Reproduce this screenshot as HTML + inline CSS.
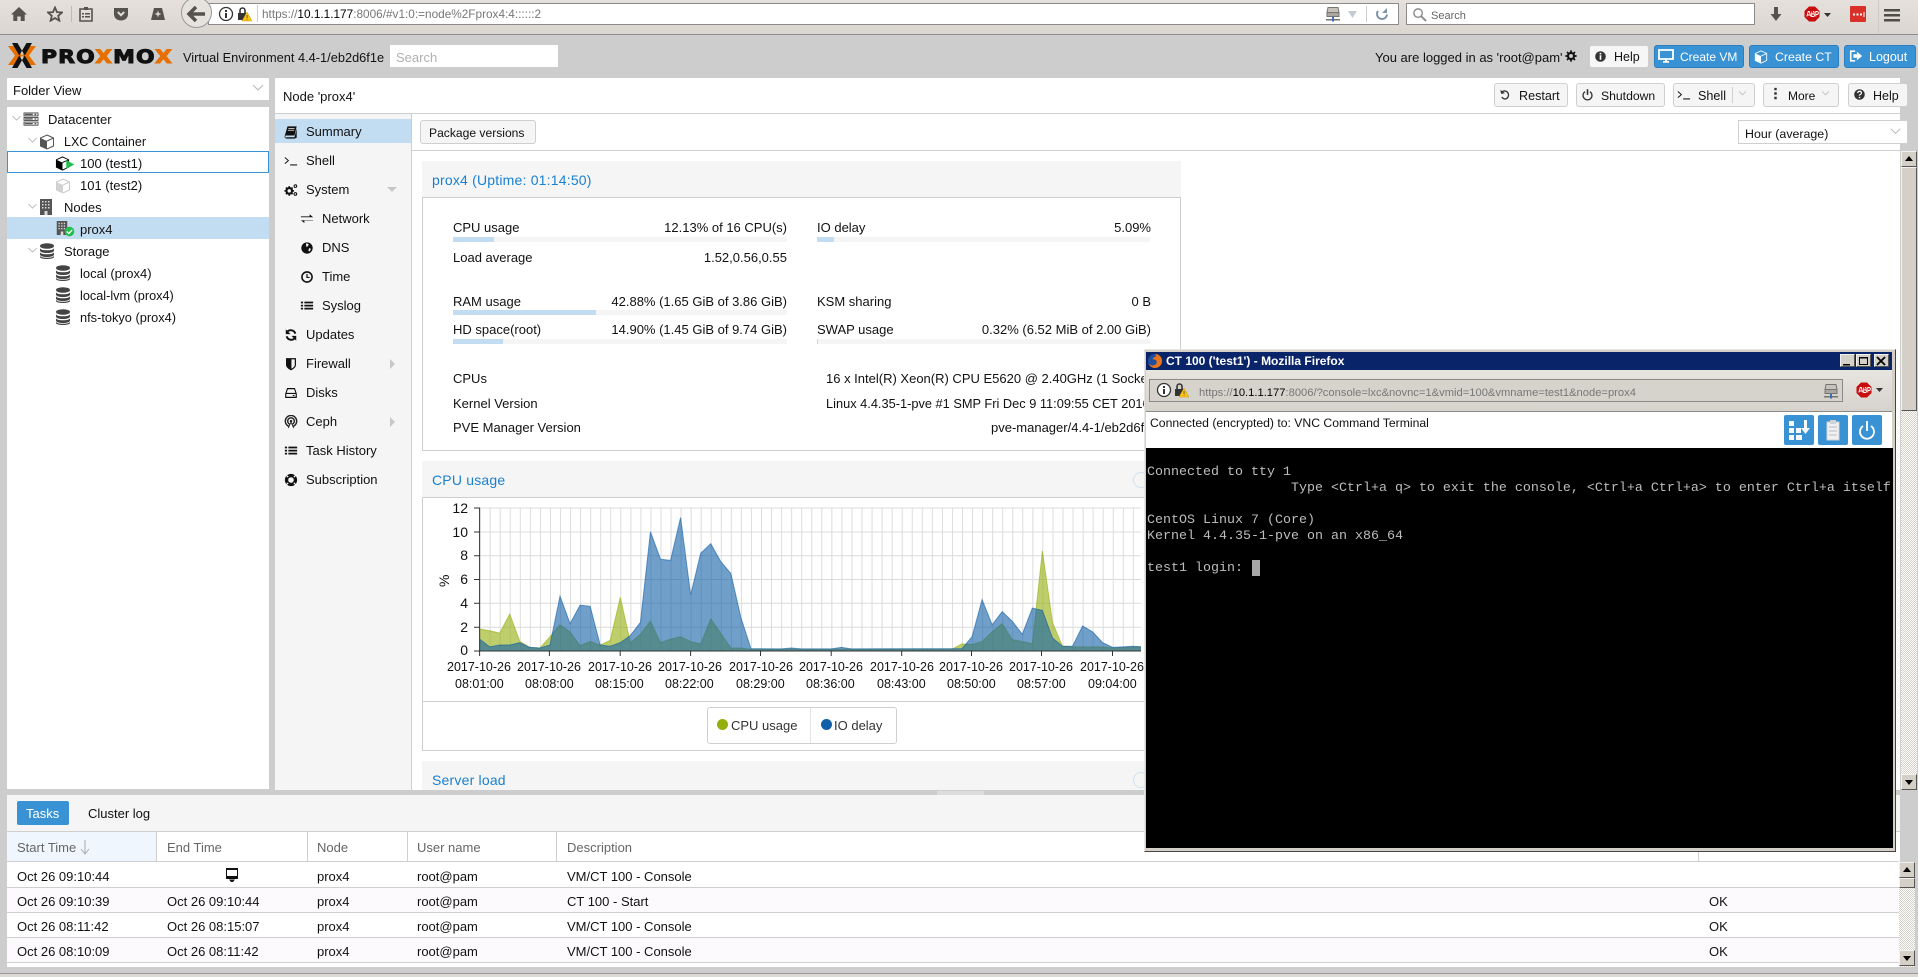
<!DOCTYPE html>
<html><head><meta charset="utf-8"><title>Proxmox</title>
<style>
html,body{margin:0;padding:0;width:1918px;height:977px;overflow:hidden;background:#cdcdcd}
body{position:relative;font:13px "Liberation Sans",sans-serif;color:#111}
.a{position:absolute}
.t{position:absolute;white-space:nowrap;line-height:16px;height:16px;margin-top:1px}
.r{position:absolute;white-space:nowrap;line-height:16px;height:16px;text-align:right;margin-top:1px}
.L{position:absolute;left:0;top:0}
.btn{position:absolute;box-sizing:border-box;border:1px solid #cfcfcf;border-radius:3px;background:#f5f5f5}
.bl{position:absolute;box-sizing:border-box;border:1px solid #2a7fc0;border-radius:3px;background:#3892d4}
.w{color:#fff}
.g{color:#666}
.tb{color:#1a80d0;letter-spacing:.2px;margin-top:0}
.bar{position:absolute;height:5px;background:#f5f5f5}
.bar i{position:absolute;left:0;top:0;height:5px;background:#c2ddf2}
.u{font-size:11px;color:#777;margin-top:0}
.u b{font-weight:normal;color:#000}
.term{position:absolute;left:1147px;font:13.33px/16px "Liberation Mono",monospace;color:#bdbdbd;white-space:pre;margin-top:1px}
.track{background:repeating-conic-gradient(#d4d0c8 0 25%,#fff 0 50%) 0 0/2px 2px}
.sb{position:absolute;box-sizing:border-box;background:#d4d0c8;border:1px solid;border-color:#f4f2ee #555 #555 #f4f2ee}
.d{font-size:12.5px;margin-top:0}
.y{font-size:14px;margin-top:0}
</style></head>
<body>
<svg width="0" height="0" style="position:absolute">
<defs>
<symbol id="home" viewBox="0 0 16 16"><path d="M8 1L0 8.5h2.3V15h4v-4.500h3.400V15h4V8.500H16z" fill="#55534c"/></symbol>
<symbol id="star" viewBox="0 0 16 16"><path d="M8 1.500l2 4.600 5 .4-3.800 3.300 1.200 4.900L8 12.100l-4.400 2.600 1.200-4.900L1 6.500l5-.4z" fill="none" stroke="#55534c" stroke-width="1.800"/></symbol>
<symbol id="clip" viewBox="0 0 16 16"><path d="M2 3h12v12H2z" fill="none" stroke="#55534c" stroke-width="1.600"/><path d="M6 1h4v3H6zM4 7h2v1.500H4zm3 0h5v1.500H7zm-3 3h2v1.500H4zm3 0h5v1.500H7z" fill="#55534c"/></symbol>
<symbol id="pocket" viewBox="0 0 16 16"><path d="M1 2h14v6c0 4-3 6.500-7 6.500S1 12 1 8z" fill="#55534c"/><path d="M4.800 6L8 9.200 11.200 6" fill="none" stroke="#e0dcd7" stroke-width="2"/></symbol>
<symbol id="hat" viewBox="0 0 16 16"><path d="M4 2h8l3 12H1z" fill="#55534c"/><path d="M8 5.500v5M5.500 8h5" stroke="#e0dcd7" stroke-width="1.400"/></symbol>
<symbol id="info" viewBox="0 0 16 16"><circle cx="8" cy="8" r="6.500" fill="#fff" stroke="#333" stroke-width="1.300"/><path d="M7 4h2v2H7zM7 7h2v5H7z" fill="#333"/></symbol>
<symbol id="lock" viewBox="0 0 16 16"><path d="M2 7h9v7H2z" fill="#333"/><path d="M4 7V4.500a2.500 2.500 0 015 0V7" fill="none" stroke="#333" stroke-width="1.600"/><path d="M11 6l5 9H6z" fill="#fcc419" stroke="#c89a10" stroke-width=".5"/><path d="M10.700 9h.7v3h-.7zm0 3.800h.7v.8h-.7z" fill="#333"/></symbol>
<symbol id="srv" viewBox="0 0 16 16"><path d="M3 1.500h10l1 5H2z" fill="#c6c2bc" stroke="#77756f"/><path d="M2 6.500h12v4H2z" fill="#aaa6a0" stroke="#77756f"/><path d="M1 13h14v1.500H1z" fill="#77756f"/><path d="M7 11h2v4.500H7z" fill="#3a6fc0"/></symbol>
<symbol id="down" viewBox="0 0 16 16"><path d="M6 1h4v7h3.500L8 15 2.500 8H6z" fill="#55534c"/></symbol>
<symbol id="reload" viewBox="0 0 16 16"><path d="M13 8.500A5 5 0 114 5" fill="none" stroke="#7f93a8" stroke-width="2"/><path d="M3 2v5h5z" fill="#7f93a8" transform="translate(16 0) scale(-1 1)"/></symbol>
<symbol id="search" viewBox="0 0 16 16"><circle cx="6.500" cy="6.500" r="4.500" fill="none" stroke="#8a8a8a" stroke-width="1.500"/><path d="M10 10l5 5" stroke="#8a8a8a" stroke-width="2"/></symbol>
<symbol id="abp" viewBox="0 0 16 16"><path d="M5 .5h6L15.500 5v6L11 15.500H5L.5 11V5z" fill="#c70d0d"/><path d="M2.800 10.500L4.300 5.500h1L6.800 10.500M3.400 9h2.800M7.700 5.500v5h1.500q1.300 0 1.300-1.400 0-1.200-1.300-1.200H7.700m0 0h1.300q1.200 0 1.200-1.200 0-1.200-1.200-1.200M11.800 10.500v-5h1.200q1.400 0 1.400 1.500t-1.400 1.500h-1.200" fill="none" stroke="#fff" stroke-width=".9"/></symbol>
<symbol id="chev" viewBox="0 0 16 16"><path d="M3 5l5 5 5-5" fill="none" stroke="#b9b9b9" stroke-width="1.100"/></symbol>
<symbol id="dc" viewBox="0 0 16 16"><path d="M0 1h16v3.500H0zM0 6.200h16v3.500H0zM0 11.500h16V15H0z" fill="#fff" stroke="#444" stroke-width="1"/><path d="M1 2h9v1.500H1zM1 7.200h9v1.500H1zM1 12.500h9V14H1zM12 2h2v1.500h-2zM12 7.200h2v1.500h-2zM12 12.500h2V14h-2z" fill="#555"/></symbol>
<symbol id="cube" viewBox="0 0 16 16"><path d="M8 1l6.500 3v8L8 15l-6.500-3V4z" fill="#fff" stroke="#555" stroke-width="1"/><path d="M1.500 4L8 7v8l-6.500-3z" fill="#555"/><path d="M8 7l6.500-3" stroke="#555"/></symbol>
<symbol id="cubeb" viewBox="0 0 16 16"><path d="M8 1l6.500 3v8L8 15l-6.500-3V4z" fill="#fff" stroke="#000" stroke-width="1"/><path d="M1.500 4L8 7v8l-6.500-3z" fill="#000"/><path d="M8 7l6.500-3" stroke="#000"/></symbol>
<symbol id="cubeg" viewBox="0 0 16 16"><path d="M8 1l6.500 3v8L8 15l-6.500-3V4z" fill="#fff" stroke="#ccc" stroke-width="1"/><path d="M1.500 4L8 7v8l-6.500-3z" fill="#d2d2d2"/><path d="M8 7l6.500-3" stroke="#ccc"/></symbol>
<symbol id="cubew" viewBox="0 0 16 16"><path d="M8 1l6.500 3v8L8 15l-6.500-3V4z" fill="#3892d4" stroke="#fff" stroke-width="1"/><path d="M1.500 4L8 7v8l-6.500-3z" fill="#fff"/><path d="M8 7l6.500-3" stroke="#fff"/></symbol>
<symbol id="bld" viewBox="0 0 16 16"><path d="M2 0h12v16H2z" fill="#555"/><path d="M4 2h1.500v1.500H4zM7 2h1.500v1.500H7zM10 2h1.500v1.500H10zM4 5h1.500v1.500H4zM7 5h1.500v1.500H7zM10 5h1.500v1.500H10zM4 8h1.500v1.500H4zM7 8h1.500v1.500H7zM10 8h1.500v1.500H10zM6.500 12h3v4h-3z" fill="#d9d9d9"/></symbol>
<symbol id="db" viewBox="0 0 16 16"><ellipse cx="8" cy="3" rx="7" ry="2.800" fill="#444"/><path d="M1 5v2.500C1 9 4 10 8 10s7-1 7-2.500V5C15 6.500 12 7.300 8 7.300S1 6.500 1 5z" fill="#444"/><path d="M1 9v2.500C1 13 4 14 8 14s7-1 7-2.500V9c0 1.500-3 2.300-7 2.300S1 10.500 1 9z" fill="#444"/><path d="M1 12.500V14c0 1.200 3 2 7 2s7-.8 7-2v-1.500c0 1.500-3 2.300-7 2.300s-7-.8-7-2.300z" fill="#444"/></symbol>
<symbol id="book" viewBox="0 0 16 16"><path d="M4 1.500h10.500L12 12H2.500q-1.500 0-1 1.500t2 .5H12l2.500-10v10.500L12 15.500H3q-2.500 0-2.300-2.500z" fill="#111"/><path d="M5 4h7M4.500 6h7" stroke="#f5f5f5" stroke-width=".8"/></symbol>
<symbol id="prompt" viewBox="0 0 16 16"><path d="M1 4l4 3.500L1 11" fill="none" stroke="#111" stroke-width="1.100"/><path d="M7 12.500h8" stroke="#111" stroke-width="1.200"/></symbol>
<symbol id="cogs" viewBox="0 0 16 16"><circle cx="6" cy="9" r="3.200" fill="none" stroke="#111" stroke-width="2.400"/><path d="M6 3.500v2M6 12.500v2M.5 9h2M9.500 9h2M2.200 5.200l1.400 1.400M8.400 11.400l1.400 1.400M2.200 12.800l1.400-1.400M8.400 6.600l1.400-1.400" stroke="#111" stroke-width="1.800"/><circle cx="13" cy="3.500" r="1.500" fill="none" stroke="#111" stroke-width="1.200"/><circle cx="13" cy="12.500" r="1.500" fill="none" stroke="#111" stroke-width="1.200"/></symbol>
<symbol id="xch" viewBox="0 0 16 16"><path d="M1 5h10V2.500L15 6H1zM15 10H5v2.500L1 9.500h14z" fill="#111"/></symbol>
<symbol id="globe" viewBox="0 0 16 16"><circle cx="8" cy="8" r="6.500" fill="#111"/><path d="M7 2.500l3 1-1 2.500-2 .5zM10.500 8l2 1-1.500 3-1.500-1z" fill="#f5f5f5"/></symbol>
<symbol id="clock" viewBox="0 0 16 16"><circle cx="8" cy="8" r="5.800" fill="none" stroke="#111" stroke-width="1.800"/><path d="M8 4.500V8.500H11" fill="none" stroke="#111" stroke-width="1.400"/></symbol>
<symbol id="list" viewBox="0 0 16 16"><path d="M1 3h2.500v2H1zM5 3h10v2H5zM1 6.500h2.500v2H1zM5 6.500h10v2H5zM1 10h2.500v2H1zM5 10h10v2H5z" fill="#111"/></symbol>
<symbol id="upd" viewBox="0 0 16 16"><path d="M13 6.500A5.500 5.500 0 003.500 4.500M3 9.500a5.500 5.500 0 009.500 2" fill="none" stroke="#111" stroke-width="2.200"/><path d="M2 1.500V7h5.500zM14 14.500V9H8.500z" fill="#111"/></symbol>
<symbol id="shield" viewBox="0 0 16 16"><path d="M3 2h10v7q0 3-5 5.500Q3 12 3 9z" fill="none" stroke="#111" stroke-width="1.400"/><path d="M3 2h5.500v12.500Q3 12 3 9z" fill="#111"/></symbol>
<symbol id="disk" viewBox="0 0 16 16"><path d="M2 9l2-6h8l2 6v4H2z" fill="none" stroke="#111" stroke-width="1.300"/><path d="M2 8.500h12" stroke="#111" stroke-width="1.300"/><path d="M10 10.200h2v1.300h-2z" fill="#111"/></symbol>
<symbol id="ceph" viewBox="0 0 16 16"><circle cx="8" cy="7" r="6.500" fill="none" stroke="#222" stroke-width="1.600"/><circle cx="8" cy="7" r="3.800" fill="none" stroke="#222" stroke-width="1.600"/><circle cx="8" cy="7" r="1.400" fill="#222"/><path d="M5 15l3-7 3 7" fill="#fff" stroke="#222"/></symbol>
<symbol id="buoy" viewBox="0 0 16 16"><circle cx="8" cy="8" r="7" fill="#111"/><circle cx="8" cy="8" r="3.200" fill="#f5f5f5"/><path d="M2.500 2.500l2.300 2.300M13.500 2.500l-2.300 2.300M2.500 13.500l2.300-2.300M13.500 13.500l-2.300-2.300" stroke="#f5f5f5" stroke-width="1.400"/></symbol>
<symbol id="ic" viewBox="0 0 16 16"><circle cx="8" cy="8" r="6.500" fill="#333"/><path d="M7 3.500h2v2H7zM7 6.500h2V12H7z" fill="#fff"/></symbol>
<symbol id="q" viewBox="0 0 16 16"><circle cx="8" cy="8" r="6.500" fill="#333"/><path d="M5.700 6.200q.3-2.200 2.400-2.200t2.300 2q0 1.200-1.400 2t-1 1.500" fill="none" stroke="#fff" stroke-width="1.500"/><path d="M7.200 10.800h1.700v1.700H7.200z" fill="#fff"/></symbol>
<symbol id="gear" viewBox="0 0 16 16"><circle cx="8" cy="8" r="4" fill="none" stroke="#111" stroke-width="2.800"/><path d="M8 .5v3M8 12.500v3M.5 8h3M12.500 8h3M2.700 2.700l2.100 2.100M11.200 11.200l2.100 2.100M2.700 13.300l2.100-2.100M11.200 4.800l2.100-2.100" stroke="#111" stroke-width="2.400"/></symbol>
<symbol id="mon" viewBox="0 0 16 16"><path d="M1 2h14v9H1z" fill="none" stroke="#fff" stroke-width="1.800"/><path d="M5 13h6v1.800H5zM7 11h2v2H7z" fill="#fff"/></symbol>
<symbol id="monb" viewBox="0 0 16 16"><path d="M2 1h12v11H2z" fill="#111"/><path d="M3 3h10v6H3z" fill="#fff"/><path d="M5 12.500h6L9 15H7z" fill="#111"/></symbol>
<symbol id="logout" viewBox="0 0 16 16"><path d="M7 2.500H2v11h5" fill="none" stroke="#fff" stroke-width="1.800"/><path d="M9 3l6 5-6 5v-3H5V6h4z" fill="#fff"/></symbol>
<symbol id="restart" viewBox="0 0 16 16"><path d="M4 4.500A5 5 0 118 13.500 5 5 0 013.500 11" fill="none" stroke="#333" stroke-width="1.600"/><path d="M2 2v5h5z" fill="#333" transform="rotate(-10 4 4)"/></symbol>
<symbol id="power" viewBox="0 0 16 16"><path d="M5 4.500a5.500 5.500 0 106 0" fill="none" stroke="#333" stroke-width="1.600"/><path d="M7 1.500h2v7H7z" fill="#333"/></symbol>
<symbol id="dots" viewBox="0 0 16 16"><path d="M6.500 1h3v3h-3zM6.500 6.500h3v3h-3zM6.500 12h3v3h-3z" fill="#333"/></symbol>
<symbol id="ok" viewBox="0 0 16 16"><circle cx="8" cy="8" r="7" fill="#21bf4b"/><path d="M4 8l3 3 5-5.500" fill="none" stroke="#fff" stroke-width="1.800"/></symbol>
<symbol id="play" viewBox="0 0 16 16"><path d="M2 1l13 7-13 7z" fill="#21bf4b"/></symbol>
<pattern id="vg" patternUnits="userSpaceOnUse" width="10.05" height="143" x="479.6" y="508"><path d="M.5 0v143" stroke="#dcdcdc"/></pattern>
</defs>
</svg>

<!-- firefox toolbar -->
<div class="a" style="left:0;top:0;width:1918px;height:34px;background:linear-gradient(#e6e0dc,#dad6d0)"></div>
<div class="a" style="left:0;top:34px;width:1918px;height:1px;background:#8e8e8e"></div>
<div class="a" style="left:208px;top:3px;width:1191px;height:22px;box-sizing:border-box;background:#fff;border:1px solid #8c8c8c"></div>
<div class="a" style="left:1406px;top:3px;width:349px;height:22px;box-sizing:border-box;background:#fff;border:1px solid #8c8c8c"></div>
<div class="a" style="left:181px;top:-3px;width:31px;height:31px;box-sizing:border-box;border-radius:50%;background:#e6e2dd;border:1px solid #999"></div>
<div class="a" style="left:257px;top:5px;width:1px;height:17px;background:#ccc"></div>
<div class="a" style="left:1366px;top:6px;width:1px;height:16px;background:#ccc"></div>
<div class="a" style="left:71px;top:6px;width:1px;height:16px;background:#bbb"></div>
<div class="a" style="left:1878px;top:0;width:1px;height:33px;background:#cdc9c3"></div>

<!-- panels -->
<div class="a" style="left:390px;top:45px;width:168px;height:22px;background:#fff"></div>
<div class="a" style="left:7px;top:78px;width:262px;height:22px;background:#fff"></div>
<div class="a" style="left:7px;top:107px;width:262px;height:682px;background:#fff"></div>
<div class="a" style="left:7px;top:217px;width:262px;height:22px;background:#c2ddf2"></div>
<div class="a" style="left:7px;top:151px;width:262px;height:22px;box-sizing:border-box;border:1px solid #3892d4"></div>
<div class="a" style="left:275px;top:78px;width:1625px;height:712px;background:#fff"></div>
<div class="a" style="left:275px;top:113px;width:1625px;height:1px;background:#cfcfcf"></div>
<div class="a" style="left:275px;top:114px;width:136px;height:676px;background:#f5f5f5"></div>
<div class="a" style="left:411px;top:114px;width:1px;height:676px;background:#cfcfcf"></div>
<div class="a" style="left:275px;top:119px;width:136px;height:24px;background:#c2ddf2"></div>
<div class="a" style="left:412px;top:150px;width:1488px;height:1px;background:#cfcfcf"></div>
<div class="btn" style="left:420px;top:120px;width:116px;height:24px"></div>
<div class="a" style="left:1738px;top:120px;width:170px;height:24px;box-sizing:border-box;border:1px solid #cfcfcf;background:#fff"></div>

<!-- toolbar buttons -->
<div class="btn" style="left:1589px;top:45px;width:60px;height:23px;background:#f6f6f6"></div>
<div class="bl" style="left:1654px;top:45px;width:90px;height:23px"></div>
<div class="bl" style="left:1749px;top:45px;width:90px;height:23px"></div>
<div class="bl" style="left:1844px;top:45px;width:72px;height:23px"></div>
<div class="btn" style="left:1494px;top:83px;width:74px;height:24px"></div>
<div class="btn" style="left:1576px;top:83px;width:89px;height:24px"></div>
<div class="btn" style="left:1673px;top:83px;width:82px;height:24px"></div>
<div class="a" style="left:1732px;top:87px;width:1px;height:16px;background:#cfcfcf"></div>
<div class="btn" style="left:1763px;top:83px;width:76px;height:24px"></div>
<div class="btn" style="left:1848px;top:83px;width:60px;height:24px"></div>

<!-- summary panel -->
<div class="a" style="left:422px;top:161px;width:759px;height:36px;background:#f5f5f5"></div>
<div class="a" style="left:422px;top:197px;width:759px;height:254px;box-sizing:border-box;border:1px solid #cfcfcf;background:#fff"></div>
<div class="bar" style="left:453px;top:237px;width:334px"><i style="width:41px"></i></div>
<div class="bar" style="left:817px;top:237px;width:333px"><i style="width:17px"></i></div>
<div class="bar" style="left:453px;top:310px;width:334px"><i style="width:143px"></i></div>
<div class="bar" style="left:453px;top:339px;width:334px"><i style="width:50px"></i></div>
<div class="bar" style="left:817px;top:339px;width:333px"><i style="width:1px"></i></div>

<!-- cpu panel -->
<div class="a" style="left:422px;top:461px;width:759px;height:36px;background:#f5f5f5"></div>
<div class="a" style="left:422px;top:497px;width:759px;height:254px;box-sizing:border-box;border:1px solid #cfcfcf;background:#fff"></div>
<div class="a" style="left:422px;top:701px;width:759px;height:1px;background:#cfcfcf"></div>
<div class="a" style="left:707px;top:707px;width:190px;height:37px;box-sizing:border-box;border:1px solid #cfcfcf;border-radius:3px;background:#fff"></div>
<div class="a" style="left:810px;top:708px;width:1px;height:35px;background:#e4e4e4"></div>
<div class="a" style="left:717px;top:719px;width:11px;height:11px;border-radius:50%;background:#94ae0a"></div>
<div class="a" style="left:821px;top:719px;width:11px;height:11px;border-radius:50%;background:#115fa6"></div>
<div class="a" style="left:422px;top:761px;width:759px;height:29px;background:#f5f5f5"></div>
<div class="a" style="left:1133px;top:472px;width:16px;height:16px;box-sizing:border-box;border:1px solid #cfe3f3;border-radius:50%"></div>
<div class="a" style="left:1133px;top:772px;width:16px;height:16px;box-sizing:border-box;border:1px solid #cfe3f3;border-radius:50%"></div>

<!-- chart -->
<svg class="L" width="1918" height="977" style="pointer-events:none">
<rect x="479.6" y="508" width="661.4" height="143" fill="url(#vg)"/>
<path d="M479.600 508H1141M479.600 532H1141M479.600 555.800H1141M479.600 579.500H1141M479.600 603.300H1141M479.600 627.200H1141" stroke="#dcdcdc" fill="none"/>
<svg x="479.6" y="500" width="661.4" height="152" viewBox="0 0 661.4 152">
<g transform="translate(0,151) scale(10.05,-11.92)">
<polygon fill="#94ae0a" fill-opacity=".6" stroke="#94ae0a" stroke-opacity=".6" vector-effect="non-scaling-stroke" points="0,0 0,1.85 1,1.7 2,1.5 3,3.1 4,.8 5,.3 6,.25 7,1.2 8,2.2 9,1.6 10,.45 11,.8 12,.5 13,.9 14,4.5 15,.7 16,1.4 17,2.5 18,.7 19,1 20,1.2 21,.8 22,.6 23,2.7 24,1.5 25,.25 26,.25 27,.15 47,.15 48,.6 49,.55 50,.8 51,1.6 52,2.3 53,.95 54,.8 55,.6 56,8.4 57,2.4 58,.4 59,.35 62,.35 63,.25 66,.35 66,0"/>
<polygon fill="#115fa6" fill-opacity=".6" stroke="#115fa6" stroke-opacity=".6" vector-effect="non-scaling-stroke" points="0,0 0,1 1,.35 2,.5 3,.5 4,.7 5,.3 6,.25 7,.5 8,4.6 9,2.3 10,3.85 11,3.75 12,.5 13,.4 14,.7 15,1.3 16,2.4 17,10 18,7.7 19,7.6 20,11.2 21,4.7 22,8.2 23,9 24,7.5 25,6.5 26,2.8 27,.2 30,.18 31,.25 32,.18 35,.18 36,.3 37,.18 48,.2 49,1.2 50,4.3 51,2.2 52,3.3 53,2.5 54,1.4 55,3.6 56,3.4 57,1.1 58,.4 59,.4 60,2.1 61,1.6 62,.7 63,.3 64,.35 65,.4 66,.35 66,0"/>
</g></svg>
<path d="M479.600 508V652M474 508H480M474 532H480M474 555.800H480M474 579.500H480M474 603.300H480M474 627.200H480M474 651H1141" stroke="#333" fill="none"/>
<path d="M479.600 651v5M549.400 651v5M620.200 651v5M690.600 651v5M760.500 651v5M831.200 651v5M901.700 651v5M971.500 651v5M1041.500 651v5M1112.500 651v5" stroke="#333" fill="none"/>
</svg>

<!-- icon layer -->
<svg class="L" width="1918" height="977">
<use href="#home" x="11" y="6" width="16" height="16"/>
<use href="#star" x="47" y="6" width="16" height="16"/>
<use href="#clip" x="78" y="6" width="16" height="16"/>
<use href="#pocket" x="113" y="6" width="16" height="16"/>
<use href="#hat" x="150" y="6" width="16" height="16"/>
<path d="M189 14h16M196 7l-7 7 7 7" fill="none" stroke="#55534c" stroke-width="3.500"/>
<use href="#info" x="218" y="6" width="16" height="16"/>
<use href="#lock" x="236" y="6" width="16" height="16"/>
<use href="#srv" x="1325" y="6" width="16" height="16"/>
<path d="M1348 11h9l-4.500 7z" fill="#c4cbd3"/>
<use href="#reload" x="1374" y="6" width="16" height="16"/>
<use href="#search" x="1412" y="7" width="15" height="15"/>
<use href="#down" x="1768" y="6" width="16" height="16"/>
<use href="#abp" x="1804" y="6" width="16" height="16"/>
<path d="M1824 13h7l-3.500 4z" fill="#333"/>
<rect x="1850" y="6" width="16" height="16" rx="1" fill="#d9302a"/>
<path d="M1853 13.500h2v2h-2zM1856.500 13.500h2v2h-2zM1860 13.500h2v2h-2zM1863.500 12h1v5h-1z" fill="#fff"/>
<path d="M1884 9h16v2.500h-16zM1884 14h16v2.500h-16zM1884 19h16v2.500h-16z" fill="#4f4d47"/>

<!-- logo -->
<path d="M8 46h7l7 9.500-7 9.500H8l7-9.500zM36 46h-7l-7 9.500 7 9.500h7l-7-9.500z" fill="#e57000"/>
<path d="M12 43h5.500L32 68h-5.500zM32 43h-5.500L12 68h5.500z" fill="#111"/>

<use href="#chev" x="250" y="80" width="16" height="16"/>
<use href="#chev" x="10" y="112" width="13" height="13"/>
<use href="#dc" x="23" y="112" width="16" height="14"/>
<use href="#chev" x="26" y="134" width="13" height="13"/>
<use href="#cube" x="39" y="134" width="16" height="16"/>
<use href="#cubeb" x="55" y="156" width="15" height="15"/>
<use href="#play" x="65" y="159" width="10" height="11"/>
<use href="#cubeg" x="55" y="178" width="16" height="16"/>
<use href="#chev" x="26" y="200" width="13" height="13"/>
<use href="#bld" x="38" y="199" width="16" height="16"/>
<use href="#bld" x="54" y="221" width="16" height="14"/>
<use href="#ok" x="64" y="226" width="11" height="11"/>
<use href="#chev" x="26" y="244" width="13" height="13"/>
<use href="#db" x="39" y="243" width="16" height="16"/>
<use href="#db" x="55" y="265" width="16" height="16"/>
<use href="#db" x="55" y="287" width="16" height="16"/>
<use href="#db" x="55" y="309" width="16" height="16"/>

<use href="#book" x="284" y="125" width="14" height="14"/>
<use href="#prompt" x="284" y="154" width="14" height="14"/>
<use href="#cogs" x="284" y="183" width="14" height="14"/>
<path d="M387 187h10l-5 5z" fill="#c8c8c8"/>
<use href="#xch" x="300" y="212" width="14" height="14"/>
<use href="#globe" x="300" y="241" width="14" height="14"/>
<use href="#clock" x="300" y="270" width="14" height="14"/>
<use href="#list" x="300" y="299" width="14" height="14"/>
<use href="#upd" x="284" y="328" width="14" height="14"/>
<use href="#shield" x="284" y="357" width="14" height="14"/>
<path d="M390 359l5 5-5 5z" fill="#c8c8c8"/>
<use href="#disk" x="284" y="386" width="14" height="14"/>
<use href="#ceph" x="284" y="415" width="14" height="14"/>
<path d="M390 417l5 5-5 5z" fill="#c8c8c8"/>
<use href="#list" x="284" y="444" width="14" height="14"/>
<use href="#buoy" x="284" y="473" width="14" height="14"/>

<use href="#gear" x="1565" y="50" width="12" height="12"/>
<use href="#ic" x="1594" y="50" width="13" height="13"/>
<use href="#mon" x="1658" y="48" width="16" height="16"/>
<use href="#cubew" x="1754" y="50" width="14" height="14"/>
<use href="#logout" x="1849" y="49" width="14" height="14"/>
<use href="#restart" x="1499" y="88" width="13" height="13"/>
<use href="#power" x="1581" y="88" width="13" height="13"/>
<use href="#prompt" x="1677" y="88" width="14" height="14"/>
<use href="#chev" x="1737" y="88" width="11" height="11"/>
<use href="#dots" x="1769" y="87" width="13" height="13"/>
<use href="#chev" x="1820" y="88" width="11" height="11"/>
<use href="#q" x="1853" y="88" width="13" height="13"/>
<use href="#chev" x="1888" y="124" width="15" height="15"/>
</svg>

<!-- toolbar text -->
<span class="t u" style="left:262px;top:6px;font-size:11.8px">https://<b>10.1.1.177</b>:8006/#v1:0:=node%2Fprox4:4::::::2</span>
<span class="t g" style="left:1431px;top:7px;font-size:11px">Search</span>

<span class="t" style="left:41px;top:45px;height:22px;font:bold 19px/22px 'DejaVu Sans',sans-serif;letter-spacing:1px;color:#111;-webkit-text-stroke:1px #111;transform:scaleX(1.15);transform-origin:0 50%">PRO<span style="color:#e57000;-webkit-text-stroke-color:#e57000">X</span>MO<span style="color:#e57000;-webkit-text-stroke-color:#e57000">X</span></span>
<span class="t" style="left:183px;top:49px;font-size:12.8px">Virtual Environment 4.4-1/eb2d6f1e</span>
<span class="t" style="left:396px;top:49px;color:#b0b0b0">Search</span>
<span class="t" style="left:1375px;top:49px">You are logged in as 'root@pam'</span>
<span class="t" style="left:1614px;top:48px;font-size:12.5px">Help</span>
<span class="t w" style="left:1680px;top:48px;font-size:12px">Create VM</span>
<span class="t w" style="left:1775px;top:48px;font-size:12.3px">Create CT</span>
<span class="t w" style="left:1869px;top:48px;font-size:12.5px">Logout</span>
<span class="t" style="left:13px;top:82px">Folder View</span>

<span class="t" style="left:48px;top:111px">Datacenter</span>
<span class="t" style="left:64px;top:133px;font-size:12.5px">LXC Container</span>
<span class="t" style="left:80px;top:155px">100 (test1)</span>
<span class="t" style="left:80px;top:177px">101 (test2)</span>
<span class="t" style="left:64px;top:199px">Nodes</span>
<span class="t" style="left:80px;top:221px">prox4</span>
<span class="t" style="left:64px;top:243px">Storage</span>
<span class="t" style="left:80px;top:265px">local (prox4)</span>
<span class="t" style="left:80px;top:287px;font-size:12.7px">local-lvm (prox4)</span>
<span class="t" style="left:80px;top:309px;font-size:12.8px">nfs-tokyo (prox4)</span>

<span class="t" style="left:283px;top:88px">Node 'prox4'</span>
<span class="t" style="left:1519px;top:87px;font-size:12.6px">Restart</span>
<span class="t" style="left:1601px;top:87px;font-size:12.2px">Shutdown</span>
<span class="t" style="left:1698px;top:87px;font-size:12.6px">Shell</span>
<span class="t" style="left:1788px;top:87px;font-size:12px">More</span>
<span class="t" style="left:1873px;top:87px;font-size:12.5px">Help</span>
<span class="t" style="left:429px;top:124px;font-size:12.1px">Package versions</span>
<span class="t" style="left:1745px;top:125px;font-size:12.4px">Hour (average)</span>

<span class="t" style="left:306px;top:123px">Summary</span>
<span class="t" style="left:306px;top:152px">Shell</span>
<span class="t" style="left:306px;top:181px">System</span>
<span class="t" style="left:322px;top:210px">Network</span>
<span class="t" style="left:322px;top:239px">DNS</span>
<span class="t" style="left:322px;top:268px">Time</span>
<span class="t" style="left:322px;top:297px">Syslog</span>
<span class="t" style="left:306px;top:326px">Updates</span>
<span class="t" style="left:306px;top:355px">Firewall</span>
<span class="t" style="left:306px;top:384px">Disks</span>
<span class="t" style="left:306px;top:413px">Ceph</span>
<span class="t" style="left:306px;top:442px">Task History</span>
<span class="t" style="left:306px;top:471px">Subscription</span>

<span class="t tb" style="left:432px;top:172px;font-size:14px">prox4 (Uptime: 01:14:50)</span>
<span class="t" style="left:453px;top:219px">CPU usage</span>
<span class="r" style="right:1131px;top:219px">12.13% of 16 CPU(s)</span>
<span class="t" style="left:817px;top:219px">IO delay</span>
<span class="r" style="right:767px;top:219px">5.09%</span>
<span class="t" style="left:453px;top:249px">Load average</span>
<span class="r" style="right:1131px;top:249px">1.52,0.56,0.55</span>
<span class="t" style="left:453px;top:293px">RAM usage</span>
<span class="r" style="right:1131px;top:293px">42.88% (1.65 GiB of 3.86 GiB)</span>
<span class="t" style="left:817px;top:293px">KSM sharing</span>
<span class="r" style="right:767px;top:293px">0 B</span>
<span class="t" style="left:453px;top:321px">HD space(root)</span>
<span class="r" style="right:1131px;top:321px">14.90% (1.45 GiB of 9.74 GiB)</span>
<span class="t" style="left:817px;top:321px">SWAP usage</span>
<span class="r" style="right:767px;top:321px">0.32% (6.52 MiB of 2.00 GiB)</span>
<span class="t" style="left:453px;top:370px">CPUs</span>
<span class="t" style="left:826px;top:370px">16 x Intel(R) Xeon(R) CPU E5620 @ 2.40GHz (1 Socket)</span>
<span class="t" style="left:453px;top:395px">Kernel Version</span>
<span class="t" style="left:826px;top:395px;font-size:12.8px">Linux 4.4.35-1-pve #1 SMP Fri Dec 9 11:09:55 CET 2016</span>
<span class="t" style="left:453px;top:419px">PVE Manager Version</span>
<span class="t" style="left:991px;top:419px">pve-manager/4.4-1/eb2d6f1e</span>

<span class="t tb" style="left:432px;top:472px;font-size:14px">CPU usage</span>
<span class="t" style="left:445px;top:572px;transform:rotate(-90deg);transform-origin:0 50%;font-size:14px;margin-left:-1px;margin-top:7px">%</span>
<span class="r y" style="right:1450px;top:500px">12</span>
<span class="r y" style="right:1450px;top:524px">10</span>
<span class="r y" style="right:1450px;top:547px">8</span>
<span class="r y" style="right:1450px;top:571px">6</span>
<span class="r y" style="right:1450px;top:595px">4</span>
<span class="r y" style="right:1450px;top:619px">2</span>
<span class="r y" style="right:1450px;top:642px">0</span>

<span class="t d" style="left:447px;top:659px">2017-10-26</span><span class="t d" style="left:455px;top:676px">08:01:00</span>
<span class="t d" style="left:517px;top:659px">2017-10-26</span><span class="t d" style="left:525px;top:676px">08:08:00</span>
<span class="t d" style="left:588px;top:659px">2017-10-26</span><span class="t d" style="left:595px;top:676px">08:15:00</span>
<span class="t d" style="left:658px;top:659px">2017-10-26</span><span class="t d" style="left:665px;top:676px">08:22:00</span>
<span class="t d" style="left:729px;top:659px">2017-10-26</span><span class="t d" style="left:736px;top:676px">08:29:00</span>
<span class="t d" style="left:799px;top:659px">2017-10-26</span><span class="t d" style="left:806px;top:676px">08:36:00</span>
<span class="t d" style="left:870px;top:659px">2017-10-26</span><span class="t d" style="left:877px;top:676px">08:43:00</span>
<span class="t d" style="left:939px;top:659px">2017-10-26</span><span class="t d" style="left:947px;top:676px">08:50:00</span>
<span class="t d" style="left:1009px;top:659px">2017-10-26</span><span class="t d" style="left:1017px;top:676px">08:57:00</span>
<span class="t d" style="left:1080px;top:659px">2017-10-26</span><span class="t d" style="left:1088px;top:676px">09:04:00</span>

<span class="t g" style="left:731px;top:717px;color:#333">CPU usage</span>
<span class="t g" style="left:834px;top:717px;color:#333">IO delay</span>
<span class="t tb" style="left:432px;top:772px;font-size:14px">Server load</span>

<!-- splitter + bottom panel -->
<div class="a" style="left:0;top:790px;width:1918px;height:5px;background:#cdcdcd"></div>
<div class="a" style="left:937px;top:791px;width:47px;height:4px;background:#dcdcdc"></div>
<div class="a" style="left:7px;top:795px;width:1893px;height:37px;background:#f5f5f5"></div>
<div class="a" style="left:7px;top:831px;width:1893px;height:1px;background:#cfcfcf"></div>
<div class="a" style="left:7px;top:832px;width:1893px;height:135px;background:#fff"></div>
<div class="a" style="left:17px;top:801px;width:52px;height:24px;background:#3892d4;border-radius:2px"></div>
<span class="t w" style="left:26px;top:805px">Tasks</span>
<span class="t" style="left:88px;top:805px">Cluster log</span>

<div class="a" style="left:7px;top:832px;width:149px;height:29px;background:#eff6fd"></div>
<div class="a" style="left:156px;top:832px;width:1px;height:29px;background:#cfcfcf"></div>
<div class="a" style="left:307px;top:832px;width:1px;height:29px;background:#cfcfcf"></div>
<div class="a" style="left:407px;top:832px;width:1px;height:29px;background:#cfcfcf"></div>
<div class="a" style="left:556px;top:832px;width:1px;height:29px;background:#cfcfcf"></div>
<div class="a" style="left:1698px;top:832px;width:1px;height:29px;background:#cfcfcf"></div>
<div class="a" style="left:7px;top:861px;width:1892px;height:1px;background:#cfcfcf"></div>
<div class="a" style="left:7px;top:887px;width:1892px;height:25px;background:#fdfafe"></div>
<div class="a" style="left:7px;top:937px;width:1892px;height:25px;background:#fdfafe"></div>
<div class="a" style="left:7px;top:887px;width:1892px;height:1px;background:#cfcfcf"></div>
<div class="a" style="left:7px;top:912px;width:1892px;height:1px;background:#cfcfcf"></div>
<div class="a" style="left:7px;top:937px;width:1892px;height:1px;background:#cfcfcf"></div>
<div class="a" style="left:7px;top:962px;width:1892px;height:1px;background:#cfcfcf"></div>

<span class="t g" style="left:17px;top:839px">Start Time</span>
<svg class="a" style="left:80px;top:840px" width="10" height="15"><path d="M5 0v13M1 9l4 5 4-5" fill="none" stroke="#aaa"/></svg>
<span class="t g" style="left:167px;top:839px">End Time</span>
<span class="t g" style="left:317px;top:839px">Node</span>
<span class="t g" style="left:417px;top:839px">User name</span>
<span class="t g" style="left:567px;top:839px">Description</span>

<span class="t" style="left:17px;top:868px">Oct 26 09:10:44</span>
<svg class="a" style="left:224px;top:867px" width="16" height="16"><use href="#monb" width="16" height="16"/></svg>
<span class="t" style="left:317px;top:868px">prox4</span><span class="t" style="left:417px;top:868px">root@pam</span><span class="t" style="left:567px;top:868px">VM/CT 100 - Console</span>

<span class="t" style="left:17px;top:893px">Oct 26 09:10:39</span><span class="t" style="left:167px;top:893px">Oct 26 09:10:44</span>
<span class="t" style="left:317px;top:893px">prox4</span><span class="t" style="left:417px;top:893px">root@pam</span><span class="t" style="left:567px;top:893px">CT 100 - Start</span><span class="t" style="left:1709px;top:893px">OK</span>

<span class="t" style="left:17px;top:918px">Oct 26 08:11:42</span><span class="t" style="left:167px;top:918px">Oct 26 08:15:07</span>
<span class="t" style="left:317px;top:918px">prox4</span><span class="t" style="left:417px;top:918px">root@pam</span><span class="t" style="left:567px;top:918px">VM/CT 100 - Console</span><span class="t" style="left:1709px;top:918px">OK</span>

<span class="t" style="left:17px;top:943px">Oct 26 08:10:09</span><span class="t" style="left:167px;top:943px">Oct 26 08:11:42</span>
<span class="t" style="left:317px;top:943px">prox4</span><span class="t" style="left:417px;top:943px">root@pam</span><span class="t" style="left:567px;top:943px">VM/CT 100 - Console</span><span class="t" style="left:1709px;top:943px">OK</span>

<div class="a" style="left:0;top:973px;width:1918px;height:1px;background:#9a9a9a"></div>
<div class="a" style="left:0;top:974px;width:1918px;height:3px;background:#dcd8d3"></div>

<!-- scrollbars -->
<div class="a track" style="left:1901px;top:151px;width:16px;height:639px"></div>
<div class="sb" style="left:1901px;top:167px;width:16px;height:244px"></div>
<div class="sb" style="left:1901px;top:151px;width:16px;height:16px"></div>
<div class="sb" style="left:1901px;top:774px;width:16px;height:16px"></div>
<div class="a track" style="left:1899px;top:862px;width:16px;height:105px"></div>
<div class="sb" style="left:1899px;top:878px;width:16px;height:10px"></div>
<div class="sb" style="left:1899px;top:862px;width:16px;height:16px"></div>
<div class="sb" style="left:1899px;top:950px;width:16px;height:16px"></div>
<svg class="L" width="1918" height="977"><path d="M1905 161l4-5 4 5zM1905 780l4 5 4-5zM1903 872l4-5 4 5zM1903 956l4 5 4-5z" fill="#000"/></svg>

<!-- popup -->
<div class="a" style="left:1144px;top:349px;width:752px;height:503px;box-sizing:border-box;background:#d4d0c8;border:1px solid;border-color:#e8e6e1 #444 #444 #e8e6e1"></div>
<div class="a" style="left:1146px;top:352px;width:746px;height:18px;background:#0a246a"></div>
<div class="a" style="left:1146px;top:370px;width:746px;height:41px;background:linear-gradient(#e8e4df,#d6d2cc)"></div>
<div class="a" style="left:1146px;top:411px;width:746px;height:1px;background:#8a8a8a"></div>
<div class="a" style="left:1149px;top:379px;width:694px;height:23px;box-sizing:border-box;background:#d6d3cd;border:1px solid #8a8a8a"></div>
<div class="a" style="left:1146px;top:412px;width:746px;height:36px;background:#fff"></div>
<div class="a" style="left:1146px;top:448px;width:747px;height:400px;background:#000"></div>
<div class="a" style="left:1784px;top:415px;width:30px;height:30px;border-radius:2px;background:#3892d4"></div>
<div class="a" style="left:1818px;top:415px;width:30px;height:30px;border-radius:2px;background:#3892d4"></div>
<div class="a" style="left:1852px;top:415px;width:30px;height:30px;border-radius:2px;background:#3892d4"></div>
<div class="sb" style="left:1840px;top:354px;width:15px;height:13px"></div>
<div class="sb" style="left:1856px;top:354px;width:15px;height:13px"></div>
<div class="sb" style="left:1874px;top:354px;width:15px;height:13px"></div>
<svg class="L" width="1918" height="977">
<circle cx="1155" cy="361" r="7" fill="#1f4ea0"/>
<path d="M1155 354a7 7 0 11-6.500 9.500q3 3 6 1.500t2-4q-1-2-4-1.500 1-3 4-3z" fill="#e8741c"/>
<path d="M1843 364h7v1.500h-7zM1859 357h9v8h-9zM1860 358.500v5.500h7v-5.500z" fill="#000" fill-rule="evenodd"/>
<path d="M1877 357l8 8M1885 357l-8 8" stroke="#000" stroke-width="1.800"/>
<use href="#info" x="1156" y="382" width="16" height="16"/>
<use href="#lock" x="1173" y="382" width="16" height="16"/>
<use href="#srv" x="1823" y="383" width="16" height="16"/>
<use href="#abp" x="1856" y="382" width="16" height="16"/>
<path d="M1876 388h7l-3.500 4z" fill="#333"/>
<path d="M1789 421h5v5h-5zM1789 428h5v5h-5zM1789 435h5v5h-5zM1796 435h6v5h-6zM1796 428h5v5h-5zM1804 420h3v8h3l-4.500 6-4.500-6h3z" fill="#fff" opacity=".95"/>
<path d="M1827 422h12v18h-12z" fill="#f0f0f0" stroke="#cfd3d6"/>
<path d="M1830 420h6v4h-6z" fill="#cfd3d6"/>
<path d="M1829 427h8M1829 431h8M1829 435h8" stroke="#b9bec2"/>
<path d="M1863 426a7 7 0 108 0" fill="none" stroke="#fff" stroke-width="1.800"/>
<path d="M1867 421v10" stroke="#fff" stroke-width="1.800"/>
</svg>
<span class="t w" style="left:1166px;top:352px;font-size:12px;font-weight:bold">CT 100 ('test1') - Mozilla Firefox</span>
<span class="t u" style="left:1199px;top:385px;font-size:11.2px">https://<b>10.1.1.177</b>:8006/?console=lxc&amp;novnc=1&amp;vmid=100&amp;vmname=test1&amp;node=prox4</span>
<span class="t" style="left:1150px;top:414px;font-size:12.2px">Connected (encrypted) to: VNC Command Terminal</span>
<span class="term" style="top:464px">Connected to tty 1</span>
<span class="term" style="top:480px">                  Type &lt;Ctrl+a q&gt; to exit the console, &lt;Ctrl+a Ctrl+a&gt; to enter Ctrl+a itself</span>
<span class="term" style="top:512px">CentOS Linux 7 (Core)</span>
<span class="term" style="top:528px">Kernel 4.4.35-1-pve on an x86_64</span>
<span class="term" style="top:560px">test1 login: </span>
<div class="a" style="left:1252px;top:560px;width:8px;height:16px;background:#a8a8a8"></div>
</body></html>
